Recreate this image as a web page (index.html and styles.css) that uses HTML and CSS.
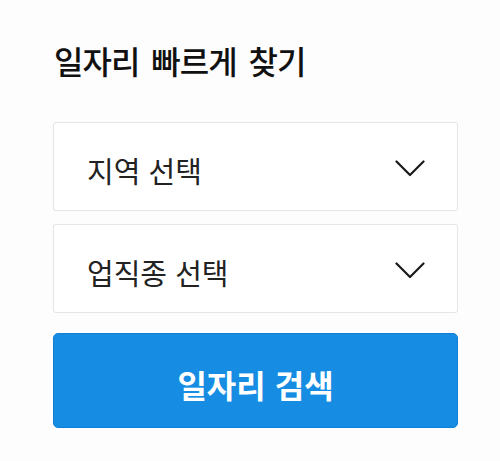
FILE: index.html
```html
<!DOCTYPE html>
<html lang="ko">
<head>
<meta charset="utf-8">
<link rel="stylesheet" href="styles.css">
</head>
<body>
<div class="panel">
  <h2 class="title">일자리 빠르게 찾기</h2>
  <div class="select">
    <span class="label">지역 선택</span>
    <svg class="chev" width="30" height="17" viewBox="0 0 30 17"><path d="M1.5 1.5 L15 15 L28.5 1.5" fill="none" stroke="#1a1a1a" stroke-width="2.2" stroke-linecap="round" stroke-linejoin="round"/></svg>
  </div>
  <div class="select">
    <span class="label">업직종 선택</span>
    <svg class="chev" width="30" height="17" viewBox="0 0 30 17"><path d="M1.5 1.5 L15 15 L28.5 1.5" fill="none" stroke="#1a1a1a" stroke-width="2.2" stroke-linecap="round" stroke-linejoin="round"/></svg>
  </div>
  <button class="search">일자리 검색</button>
</div>
</body>
</html>
```
FILE: styles.css
```css
html, body {
  margin: 0;
  padding: 0;
  background: #fdfdfd;
}
body {
  font-family: "Noto Sans CJK KR", "Noto Sans", sans-serif;
}
.panel {
  padding: 39px 42px 0 53px;
  display: flex;
  flex-direction: column;
}
.title {
  margin: 0 0 41px 1px;
  font-size: 32px;
  font-weight: 500;
  line-height: 42px;
  color: #111;
  letter-spacing: -1px;
  word-spacing: 4px;
}
.select {
  height: 87px;
  border: 1px solid #e6e6e6;
  border-radius: 3px;
  background: #fff;
  display: flex;
  align-items: center;
  justify-content: space-between;
  padding: 0 32px 0 33px;
  margin-bottom: 13px;
  box-shadow: 0 0 1px rgba(0,0,0,0.05);
}
.select + .select {
  margin-bottom: 20px;
}
.label {
  font-size: 29px;
  font-weight: 400;
  color: #222;
  margin-top: 6px;
}
.chev {
  display: block;
  margin-top: 4px;
}
.search {
  height: 95px;
  border: 1px solid #0f80da;
  border-radius: 5px;
  background: #168de2;
  color: #fff;
  font-family: inherit;
  font-size: 32px;
  font-weight: 700;
  padding: 6px 0 0;
  width: 100%;
}
```
